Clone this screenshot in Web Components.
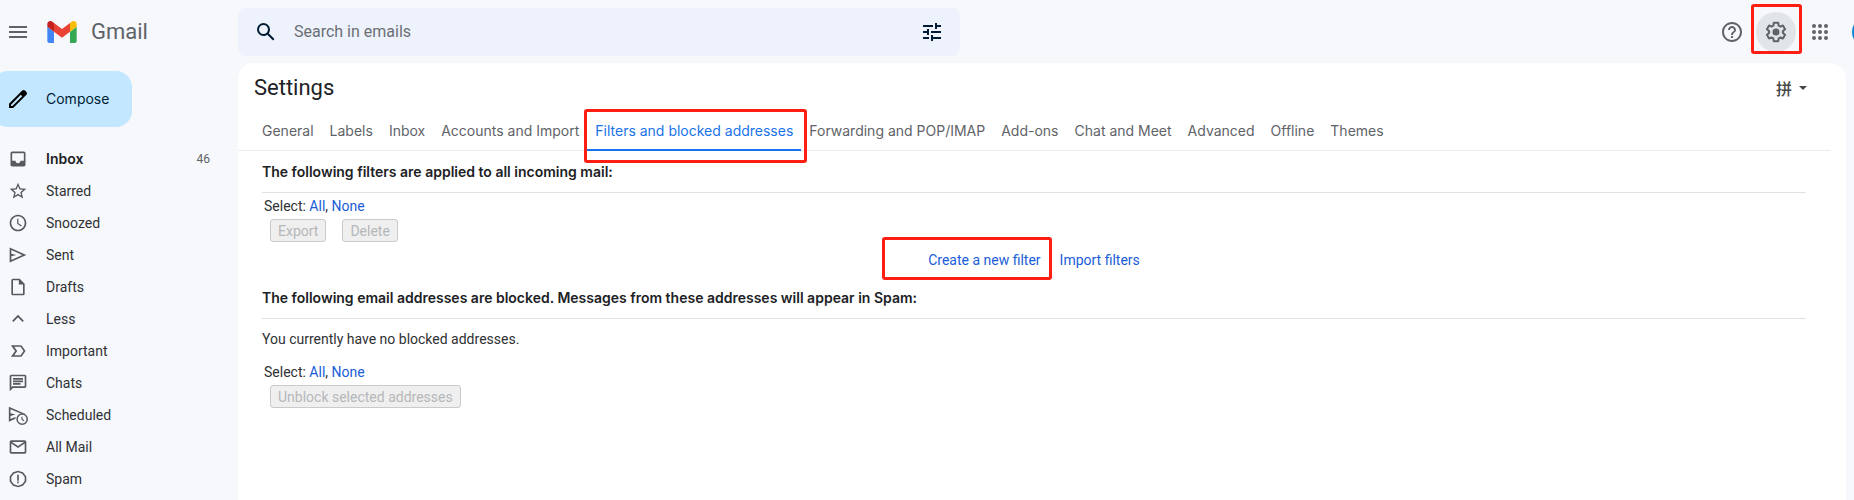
<!DOCTYPE html>
<html lang="en">
<head>
<meta charset="utf-8">
<meta name="viewport" content="width=device-width, initial-scale=1">
<title>Gmail - Settings</title>
<style>
  body {
    margin: 0;
    background: #f6f8fc;
    color: #202124;
    font: 14px/20px Roboto, "Noto Sans CJK SC", sans-serif;
  }
</style>
</head>
<body>
<mail-app>
  <mail-header slot="header"></mail-header>
  <mail-sidebar slot="sidebar">
    <nav-item icon="inbox" count="46" active>Inbox</nav-item>
    <nav-item icon="star">Starred</nav-item>
    <nav-item icon="clock">Snoozed</nav-item>
    <nav-item icon="send">Sent</nav-item>
    <nav-item icon="draft">Drafts</nav-item>
    <nav-item icon="less">Less</nav-item>
    <nav-item icon="important">Important</nav-item>
    <nav-item icon="chat">Chats</nav-item>
    <nav-item icon="scheduled">Scheduled</nav-item>
    <nav-item icon="mail">All Mail</nav-item>
    <nav-item icon="spam">Spam</nav-item>
  </mail-sidebar>
  <settings-panel>
    <settings-tab slot="tabs">General</settings-tab>
    <settings-tab slot="tabs">Labels</settings-tab>
    <settings-tab slot="tabs">Inbox</settings-tab>
    <settings-tab slot="tabs">Accounts and Import</settings-tab>
    <settings-tab slot="tabs" active>Filters and blocked addresses</settings-tab>
    <settings-tab slot="tabs">Forwarding and POP/IMAP</settings-tab>
    <settings-tab slot="tabs">Add-ons</settings-tab>
    <settings-tab slot="tabs">Chat and Meet</settings-tab>
    <settings-tab slot="tabs">Advanced</settings-tab>
    <settings-tab slot="tabs">Offline</settings-tab>
    <settings-tab slot="tabs">Themes</settings-tab>
    <filter-section></filter-section>
    <blocked-section></blocked-section>
  </settings-panel>
</mail-app>

<script>
const icons = {
  menu: '<path d="M3 18h18v-2H3v2zm0-5h18v-2H3v2zm0-7v2h18V6H3z"/>',
  search: '<path d="M20.49 19l-5.73-5.73C15.53 12.2 16 10.91 16 9.5A6.5 6.5 0 1 0 9.5 16c1.41 0 2.7-.47 3.77-1.24L19 20.49 20.49 19zM5 9.5C5 7.01 7.01 5 9.5 5S14 7.01 14 9.5 11.99 14 9.5 14 5 11.99 5 9.5z"/>',
  tune: '<path d="M3 17v2h6v-2H3zM3 5v2h10V5H3zm10 16v-2h8v-2h-8v-2h-2v6h2zM7 9v2H3v2h4v2h2V9H7zm14 4v-2H11v2h10zm-6-4h2V7h4V5h-4V3h-2v6z"/>',
  help: '<path d="M11 18h2v-2h-2v2zm1-16C6.48 2 2 6.48 2 12s4.48 10 10 10 10-4.48 10-10S17.52 2 12 2zm0 18c-4.41 0-8-3.59-8-8s3.59-8 8-8 8 3.59 8 8-3.59 8-8 8zm0-14c-2.21 0-4 1.79-4 4h2c0-1.1.9-2 2-2s2 .9 2 2c0 2-3 1.75-3 5h2c0-2.25 3-2.5 3-5 0-2.21-1.79-4-4-4z"/>',
  gear: '<path d="M13.85 22.25h-3.7c-.74 0-1.36-.54-1.45-1.27l-.27-1.89c-.27-.14-.53-.29-.79-.46l-1.8.72c-.7.26-1.47-.03-1.81-.65L2.2 15.53c-.35-.66-.2-1.44.36-1.88l1.53-1.19c-.01-.15-.02-.3-.02-.46 0-.15.01-.31.02-.46l-1.52-1.19c-.59-.45-.74-1.26-.37-1.88l1.85-3.19c.34-.62 1.11-.9 1.79-.63l1.81.73c.26-.17.52-.32.78-.46l.27-1.91c.09-.7.71-1.25 1.44-1.25h3.7c.74 0 1.36.54 1.45 1.27l.27 1.89c.27.14.53.29.79.46l1.8-.72c.71-.26 1.48.03 1.82.65l1.84 3.18c.36.66.2 1.44-.36 1.88l-1.52 1.19c.01.15.02.3.02.46s-.01.31-.02.46l1.52 1.19c.56.45.72 1.23.37 1.86l-1.86 3.22c-.34.62-1.11.9-1.8.63l-1.8-.72c-.26.17-.52.32-.78.46l-.27 1.91c-.1.68-.72 1.22-1.46 1.22zm-3.23-2h2.76l.37-2.55.53-.22c.44-.18.88-.44 1.34-.78l.45-.34 2.38.96 1.38-2.4-2.03-1.58.07-.56c.03-.26.06-.51.06-.78s-.03-.53-.06-.78l-.07-.56 2.03-1.58-1.39-2.4-2.39.96-.45-.35c-.42-.32-.87-.58-1.33-.77l-.52-.22-.37-2.55h-2.76l-.37 2.55-.53.21c-.44.19-.88.44-1.34.79l-.45.33-2.38-.95-1.39 2.39 2.03 1.58-.07.56a7 7 0 0 0-.06.79c0 .26.02.53.06.78l.07.56-2.03 1.58 1.38 2.4 2.39-.96.45.35c.43.33.86.58 1.33.77l.53.22.38 2.55z"/><circle cx="12" cy="12" r="3.5"/>',
  apps: '<path d="M6 8a2 2 0 1 0 0-4 2 2 0 0 0 0 4zm6 12a2 2 0 1 0 0-4 2 2 0 0 0 0 4zm-6 0a2 2 0 1 0 0-4 2 2 0 0 0 0 4zm0-6a2 2 0 1 0 0-4 2 2 0 0 0 0 4zm6 0a2 2 0 1 0 0-4 2 2 0 0 0 0 4zm4-8a2 2 0 1 0 4 0 2 2 0 0 0-4 0zm-4 2a2 2 0 1 0 0-4 2 2 0 0 0 0 4zm6 6a2 2 0 1 0 0-4 2 2 0 0 0 0 4zm0 6a2 2 0 1 0 0-4 2 2 0 0 0 0 4z"/>',
  pencil: '<path d="M20.41 4.94l-1.35-1.35c-.78-.78-2.05-.78-2.83 0L3 16.82V21h4.18L20.41 7.77c.79-.78.79-2.05 0-2.83zM6.41 19.06L5 19v-1.36l9.82-9.82 1.41 1.41-9.82 9.83z"/>',
  inbox: '<path d="M19 3H5c-1.1 0-2 .9-2 2v14c0 1.1.9 2 2 2h14c1.1 0 2-.9 2-2V5c0-1.1-.9-2-2-2zm0 11h-4c0 1.66-1.35 3-3 3s-3-1.34-3-3H5V5h14v9z"/>',
  star: '<path d="M22 9.24l-7.19-.62L12 2 9.19 8.63 2 9.24l5.46 4.73L5.82 21 12 17.27 18.18 21l-1.63-7.03L22 9.24zM12 15.4l-3.76 2.27 1-4.28-3.32-2.88 4.38-.38L12 6.1l1.71 4.04 4.38.38-3.32 2.88 1 4.28L12 15.4z"/>',
  clock: '<path d="M12 2C6.5 2 2 6.5 2 12s4.5 10 10 10 10-4.5 10-10S17.5 2 12 2zm0 18c-4.4 0-8-3.6-8-8s3.6-8 8-8 8 3.6 8 8-3.6 8-8 8zm.5-13H11v6l4.7 3.3 1-1.4-4.2-2.7V7z"/>',
  send: '<path d="M2 3v18l20-9L2 3zm2 3.09L17.13 12 4 17.91V13.5L10 12 4 10.5V6.09z"/>',
  draft: '<path d="M14 2H6c-1.1 0-2 .9-2 2v16c0 1.1.9 2 2 2h12c1.1 0 2-.9 2-2V8l-6-6zm4 18H6V4h7v5h5v11z"/>',
  less: '<path d="M12 7l-7 7 1.5 1.5L12 10l5.5 5.5L19 14z"/>',
  important: '<path d="M15 5H3.500l5 7-5 7H15c.7 0 1.300-.3 1.600-.8L21 12l-4.400-6.200C16.300 5.300 15.700 5 15 5zm0 12H7.500l3.500-5-3.500-5H15l3.600 5-3.600 5z"/>',
  chat: '<path d="M20 2H4c-1.100 0-2 .9-2 2v18l4-4h14c1.100 0 2-.9 2-2V4c0-1.100-.9-2-2-2zm0 14H5.200L4 17.200V4h16v12zM6 12h9v2H6zm0-3h12v2H6zm0-3h12v2H6z"/>',
  scheduled: '<path d="M1 2v18l8-3.500v-2.200l-6 2.600v-3.600l6-1.800-6-1.600V5l13 5.500 5 .2z"/><path d="M17 10a7 7 0 1 0 0 14 7 7 0 0 0 0-14zm0 12.200a5.200 5.200 0 1 1 0-10.400 5.200 5.200 0 0 1 0 10.400zm.5-8.200h-1.400v3.500l2.600 2 .9-1.200-2.100-1.500z"/>',
  mail: '<path d="M20 4H4c-1.100 0-2 .9-2 2v12c0 1.100.9 2 2 2h16c1.100 0 2-.9 2-2V6c0-1.100-.9-2-2-2zm-.8 2L12 10.800 4.800 6h14.400zM4 18V7.900l8 5.300 8-5.300V18H4z"/>',
  spam: '<path d="M12 2l6 2 4 5v6l-4 5-6 2-6-2-4-5V9l4-5 6-2zm0 2L7 5.700 4 9.700v4.600l3 4 5 1.700 5-1.700 3-4V9.700l-3-4L12 4zm-1 3h2v7h-2zm0 8h2v2h-2z"/>',
};

class MailIcon extends HTMLElement {
  connectedCallback() {
    this.attachShadow({ mode: 'open' });
    this.shadowRoot.innerHTML = `
      <style>
        :host { display: inline-block; flex: none; width: 24px; height: 24px; }
        svg { display: block; width: 100%; height: 100%; fill: currentColor; overflow: visible; }
      </style>
      <svg viewBox="0 0 24 24" aria-hidden="true">${icons[this.getAttribute('name')]}</svg>
    `;
  }
}
customElements.define('mail-icon', MailIcon);

class MailApp extends HTMLElement {
  connectedCallback() {
    this.attachShadow({ mode: 'open' });
    this.shadowRoot.innerHTML = `
      <style>
        :host { display: flex; flex-direction: column; min-height: 100vh; overflow: hidden; }
        .body { flex: 1; display: flex; padding-right: 8px; }
        main { flex: 1; min-width: 0; display: flex; }
      </style>
      <slot name="header"></slot>
      <div class="body">
        <slot name="sidebar"></slot>
        <main><slot></slot></main>
      </div>
    `;
  }
}
customElements.define('mail-app', MailApp);

/* red frame around whatever is slotted in */
class HighlightBox extends HTMLElement {
  connectedCallback() {
    this.attachShadow({ mode: 'open' });
    this.shadowRoot.innerHTML = `
      <style>
        :host { display: inline-block; position: relative; }
        .frame {
          position: absolute;
          inset: var(--frame-inset, -5px);
          border: 3px solid #ff1e12;
          border-radius: 3px;
          pointer-events: none;
          z-index: 1;
        }
      </style>
      <slot></slot>
      <div class="frame"></div>
    `;
  }
}
customElements.define('highlight-box', HighlightBox);

class MailHeader extends HTMLElement {
  connectedCallback() {
    this.attachShadow({ mode: 'open' });
    this.shadowRoot.innerHTML = `
      <style>
        * { box-sizing: border-box; }
        :host { display: block; }
        header {
          display: flex;
          align-items: center;
          height: 63px;
          overflow: hidden;
          color: #5f6368;
        }
        button {
          display: flex;
          align-items: center;
          justify-content: center;
          border: 0;
          padding: 0;
          background: none;
          color: inherit;
        }
        .brand { flex: none; display: flex; align-items: center; width: 238px; padding-left: 6px; }
        .brand a {
          display: flex;
          align-items: center;
          gap: 14px;
          margin-left: 17px;
          color: #5f6368;
          font: 22px/24px Roboto, sans-serif;
          text-decoration: none;
        }
        .search {
          display: flex;
          align-items: center;
          flex: 0 1 722px;
          height: 48px;
          padding: 0 16px;
          gap: 16px;
          border-radius: 8px;
          background: #edf2fc;
          color: #001d35;
        }
        input {
          flex: 1;
          min-width: 0;
          border: 0;
          outline: 0;
          padding: 0;
          background: none;
          font: 16px/24px Roboto, sans-serif;
        }
        input::placeholder { color: #6b6f74; opacity: 1; }
        .tools { flex: none; display: flex; align-items: center; gap: 4px; margin-left: auto; }
        .tools button { width: 40px; height: 40px; border-radius: 50%; }
        .tools .gear { background: #e1e5e8; }
        .tools .avatar {
          width: 32px;
          height: 32px;
          margin-left: 8px;
          margin-right: -30px;
          background: #0b84d0;
        }
        highlight-box { --frame-inset: -8px -6px -2px -5px; }
      </style>
      <header>
        <div class="brand">
          <button aria-label="Main menu"><mail-icon name="menu"></mail-icon></button>
          <a href="#">
            <svg width="30" height="22" viewBox="52 42 88 66" aria-hidden="true">
              <path fill="#4285f4" d="M58 108h14V74L52 59v43c0 3.320 2.690 6 6 6"/>
              <path fill="#34a853" d="M120 108h14c3.320 0 6-2.690 6-6V59l-20 15"/>
              <path fill="#fbbc04" d="M120 48v26l20-15v-8c0-7.420-8.470-11.650-14.400-7.200"/>
              <path fill="#ea4335" d="M72 74V48l24 18 24-18v26L96 92"/>
              <path fill="#c5221f" d="M52 51v8l20 15V48l-5.600-4.200c-5.940-4.450-14.400-.22-14.400 7.200"/>
            </svg>
            Gmail
          </a>
        </div>
        <div class="search">
          <button aria-label="Search"><mail-icon name="search"></mail-icon></button>
          <input type="text" aria-label="Search in emails" placeholder="Search in emails">
          <button aria-label="Search options"><mail-icon name="tune"></mail-icon></button>
        </div>
        <div class="tools">
          <button aria-label="Support"><mail-icon name="help"></mail-icon></button>
          <highlight-box>
            <button class="gear" aria-label="Settings"><mail-icon name="gear"></mail-icon></button>
          </highlight-box>
          <button aria-label="Apps"><mail-icon name="apps"></mail-icon></button>
          <button class="avatar" aria-label="Account"></button>
        </div>
      </header>
    `;
  }
}
customElements.define('mail-header', MailHeader);

class MailSidebar extends HTMLElement {
  connectedCallback() {
    this.attachShadow({ mode: 'open' });
    this.shadowRoot.innerHTML = `
      <style>
        :host { display: block; flex: none; width: 238px; padding-top: 8px; }
        .compose {
          display: flex;
          align-items: center;
          gap: 16px;
          height: 56px;
          margin: 0 0 16px -8px;
          padding: 0 23px 0 14px;
          border: 0;
          border-radius: 16px;
          background: #c2e7ff;
          color: #001d35;
          font: 14px/20px Inter, sans-serif;
        }
        .compose mail-icon { color: #000; }
      </style>
      <button class="compose"><mail-icon name="pencil"></mail-icon>Compose</button>
      <nav><slot></slot></nav>
    `;
  }
}
customElements.define('mail-sidebar', MailSidebar);

class NavItem extends HTMLElement {
  connectedCallback() {
    const count = this.getAttribute('count') || '';
    this.attachShadow({ mode: 'open' });
    this.shadowRoot.innerHTML = `
      <style>
        :host { display: block; }
        a {
          display: flex;
          align-items: center;
          gap: 18px;
          height: 32px;
          padding: 0 28px 0 8px;
          color: #303134;
          text-decoration: none;
        }
        :host([active]) a { color: #202124; font-family: Inter, sans-serif; font-weight: 600; }
        mail-icon { width: 20px; height: 20px; color: #57595c; }
        .count { margin-left: auto; color: #5f6368; font: 12px/20px Roboto, sans-serif; }
      </style>
      <a href="#">
        <mail-icon name="${this.getAttribute('icon')}"></mail-icon>
        <slot></slot>
        <span class="count">${count}</span>
      </a>
    `;
  }
}
customElements.define('nav-item', NavItem);

class SettingsPanel extends HTMLElement {
  connectedCallback() {
    this.attachShadow({ mode: 'open' });
    this.shadowRoot.innerHTML = `
      <style>
        * { box-sizing: border-box; }
        :host { display: block; flex: 1; min-width: 0; border-radius: 16px 16px 0 0; background: #fff; }
        .title { display: flex; align-items: center; justify-content: space-between; height: 50px; padding: 0 39px 0 16px; }
        h1 { margin: 0; font: 22px/28px Roboto, sans-serif; }
        .ime {
          display: flex;
          align-items: center;
          gap: 7px;
          border: 0;
          padding: 0;
          background: none;
          color: #444746;
          font: 500 16px/24px "Noto Sans CJK SC", sans-serif;
        }
        .ime::after { content: ""; border: 4px solid transparent; border-top-color: currentColor; border-bottom: 0; }
        nav { display: flex; height: 38px; margin-right: 16px; padding-left: 16px; border-bottom: 1px solid #e9ebee; }
        .content { padding: 1px 40px 0 24px; }
      </style>
      <div class="title">
        <h1>Settings</h1>
        <button class="ime" aria-label="Input tools">拼</button>
      </div>
      <nav><slot name="tabs"></slot></nav>
      <div class="content"><slot></slot></div>
    `;
  }
}
customElements.define('settings-panel', SettingsPanel);

class SettingsTab extends HTMLElement {
  connectedCallback() {
    const link = '<a href="#"><slot></slot></a>';
    this.attachShadow({ mode: 'open' });
    this.shadowRoot.innerHTML = `
      <style>
        * { box-sizing: border-box; }
        :host { display: block; flex: none; }
        a {
          display: block;
          height: 38px;
          padding: 8px 8px 0;
          color: #5f6368;
          font: 14px/20px Inter, sans-serif;
          text-decoration: none;
          white-space: nowrap;
        }
        :host([active]) a { border-bottom: 2px solid #1a73e8; color: #1a73e8; }
        highlight-box { --frame-inset: -4px -6px -12px -3px; }
      </style>
      ${this.hasAttribute('active') ? `<highlight-box>${link}</highlight-box>` : link}
    `;
  }
}
customElements.define('settings-tab', SettingsTab);

const sectionStyle = `
  * { box-sizing: border-box; }
  :host { display: block; }
  h2 { margin: 0; padding: 10px 0; border-bottom: 1px solid #dfe1e4; font: 600 14px/20px Inter, sans-serif; }
  p { margin: 0; color: #303134; }
  a { color: #1b5dd8; text-decoration: none; }
  .select { padding: 0 2px; }
  .actions { display: flex; gap: 16px; padding: 3px 8px 0; }
  button {
    height: 23px;
    padding: 0 7px;
    border: 1px solid #c9cacb;
    border-radius: 3px;
    background: #efefef;
    color: #b5b7b9;
    font: 14px/20px Roboto, sans-serif;
  }
`;

class FilterSection extends HTMLElement {
  connectedCallback() {
    this.attachShadow({ mode: 'open' });
    this.shadowRoot.innerHTML = `
      <style>
        ${sectionStyle}
        .select { padding-top: 3px; }
        .links { display: flex; justify-content: center; gap: 19px; padding: 8px 0; }
        highlight-box { --frame-inset: -13px -11px -10px -46px; }
      </style>
      <h2>The following filters are applied to all incoming mail:</h2>
      <p class="select">Select: <a href="#">All</a>, <a href="#">None</a></p>
      <div class="actions">
        <button disabled>Export</button>
        <button disabled>Delete</button>
      </div>
      <div class="links">
        <highlight-box><a href="#">Create a new filter</a></highlight-box>
        <a href="#">Import filters</a>
      </div>
    `;
  }
}
customElements.define('filter-section', FilterSection);

class BlockedSection extends HTMLElement {
  connectedCallback() {
    this.attachShadow({ mode: 'open' });
    this.shadowRoot.innerHTML = `
      <style>
        ${sectionStyle}
        .empty { padding: 10px 0 13px; }
      </style>
      <h2>The following email addresses are blocked. Messages from these addresses will appear in Spam:</h2>
      <p class="empty">You currently have no blocked addresses.</p>
      <p class="select">Select: <a href="#">All</a>, <a href="#">None</a></p>
      <div class="actions">
        <button disabled>Unblock selected addresses</button>
      </div>
    `;
  }
}
customElements.define('blocked-section', BlockedSection);
</script>
</body>
</html>
